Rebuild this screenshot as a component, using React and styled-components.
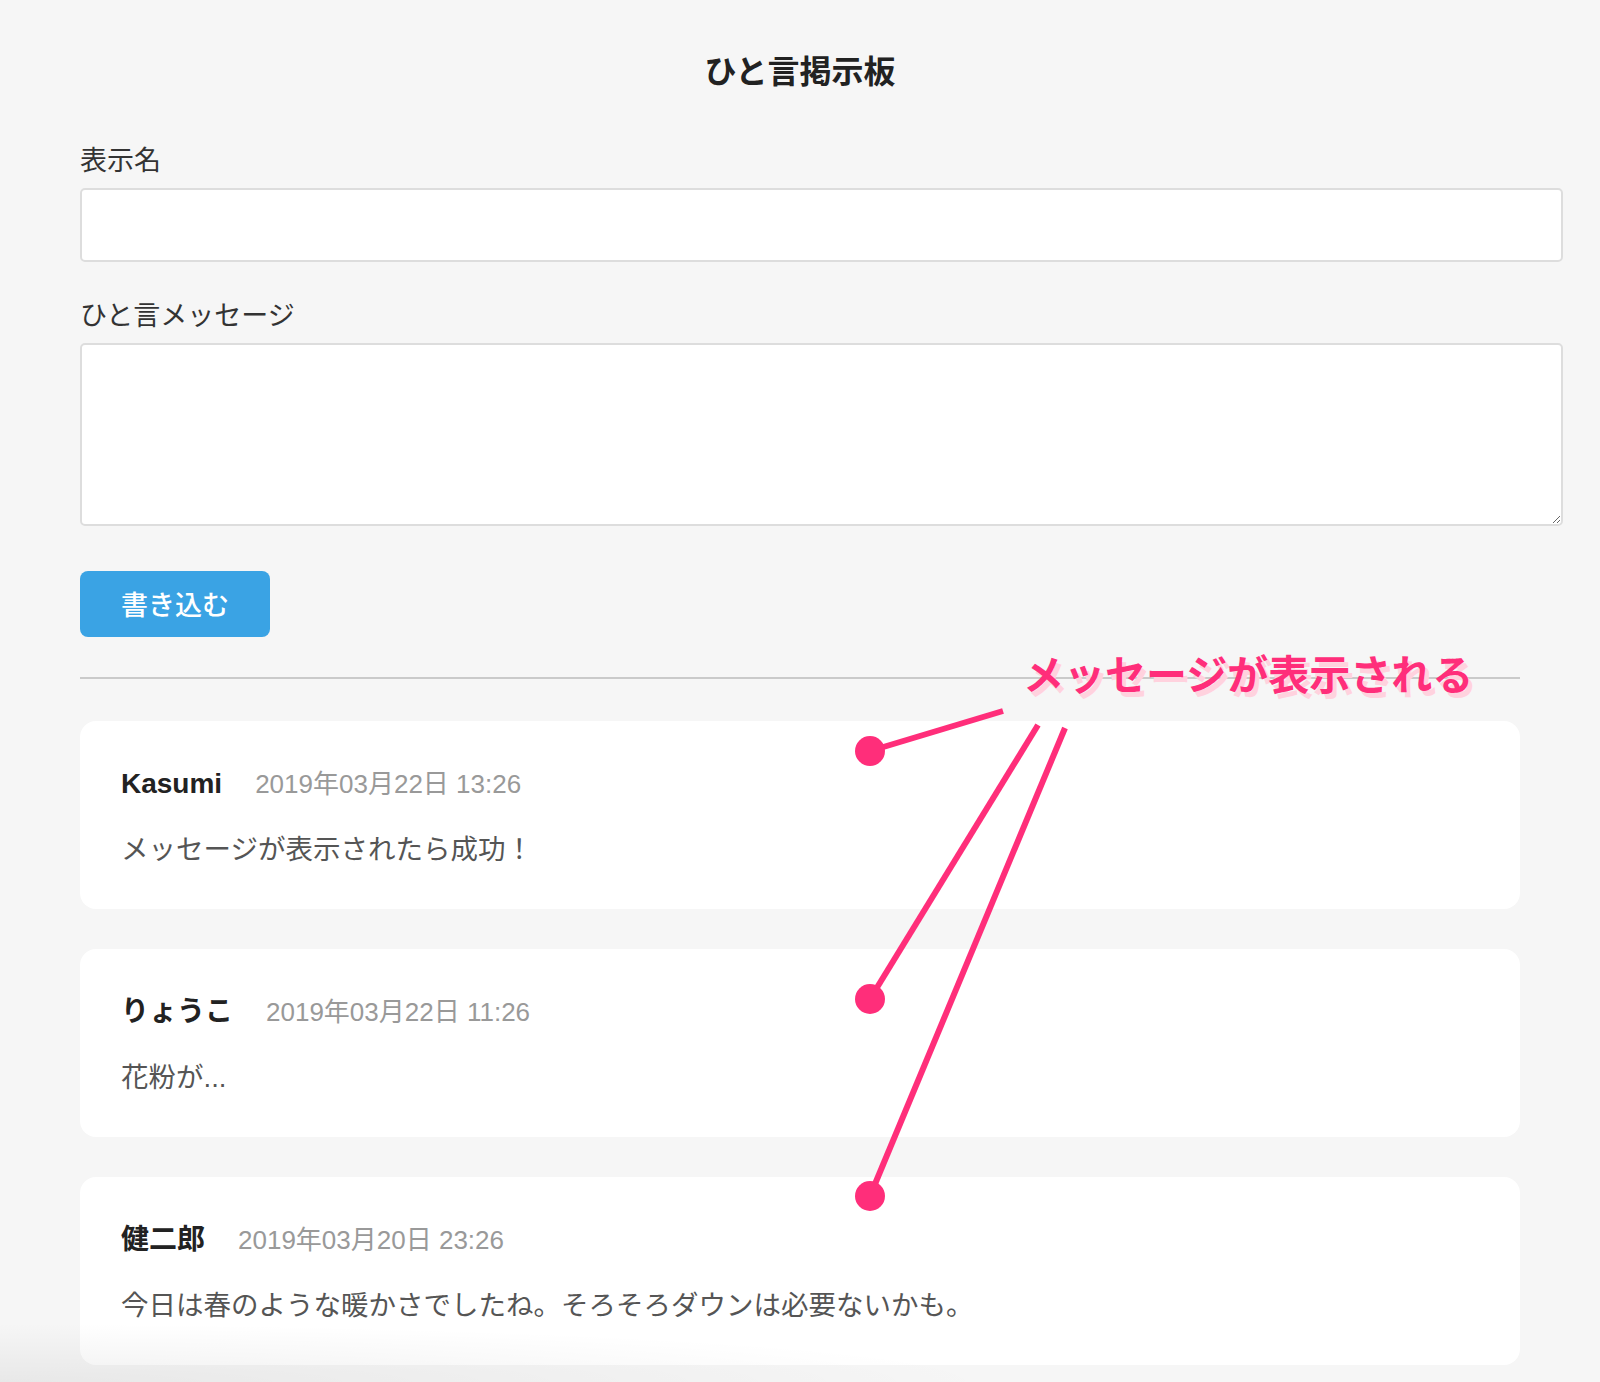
import React from "react";
import styled, { createGlobalStyle } from "styled-components";

const GlobalStyle = createGlobalStyle`
  html, body {
    margin: 0;
    padding: 0;
    background: #f6f6f6;
  }
  body {
    font-family: "Liberation Sans", "Noto Sans CJK JP", sans-serif;
    color: #333;
  }
  * { box-sizing: border-box; }
`;

const PINK = "#ff2e7a";

const Page = styled.div`
  position: relative;
  width: 1600px;
  min-height: 1382px;
  padding: 45px 80px 18px 80px;
  overflow: hidden;
`;

const Title = styled.h1`
  margin: 0;
  font-size: 32px;
  line-height: 48px;
  font-weight: 700;
  text-align: center;
  color: #222;
  font-family: "Noto Sans CJK JP", sans-serif;
`;

const Form = styled.form`
  display: flex;
  flex-direction: column;
  margin-top: 46px;
`;

const Field = styled.div`
  display: flex;
  flex-direction: column;
  gap: 10px;
  margin-top: ${(p) => p.$gap || 0}px;
`;

const Label = styled.label`
  font-size: 27px;
  line-height: 39px;
  color: #333;
  font-family: "Noto Sans CJK JP", sans-serif;
`;

const TextInput = styled.input`
  width: calc(100% + 43px);
  height: 74px;
  background: #fff;
  border: 2px solid #dddddd;
  border-radius: 5px;
  outline: none;
  padding: 0 20px;
  font-size: 26px;
`;

const TextArea = styled.textarea`
  display: block;
  width: calc(100% + 43px);
  height: 183px;
  background: #fff;
  border: 2px solid #dddddd;
  border-radius: 5px;
  outline: none;
  padding: 16px 20px;
  font-size: 26px;
  font-family: inherit;
`;

const SubmitButton = styled.button`
  margin-top: 45px;
  width: 190px;
  height: 66px;
  border: none;
  border-radius: 8px;
  background: #3aa3e4;
  color: #fff;
  font-size: 27px;
  font-family: "Noto Sans CJK JP", sans-serif;
  font-weight: 500;
  cursor: pointer;
  padding: 0 0 2px 0;
`;

const Divider = styled.hr`
  margin: 40px 0 42px 0;
  border: none;
  border-top: 2px solid #cacaca;
  height: 0;
`;

const PostList = styled.ul`
  list-style: none;
  margin: 0;
  padding: 0;
  display: flex;
  flex-direction: column;
  gap: 40px;
`;

const Card = styled.li`
  background: #fff;
  border-radius: 16px;
  padding: 43px 40px 39px 41px;
  display: flex;
  flex-direction: column;
  gap: 27px;
`;

const Meta = styled.div`
  display: flex;
  align-items: baseline;
  gap: 33px;
  line-height: 39px;
  height: 39px;
`;

const Name = styled.span`
  font-size: 28px;
  font-weight: 700;
  color: #222;
`;

const DateText = styled.span`
  font-size: 26px;
  color: #999;
`;

const Message = styled.p`
  margin: 0;
  font-size: 27.5px;
  line-height: 40px;
  color: #555;
`;

const Callout = styled.div`
  position: absolute;
  left: 1023px;
  top: 652px;
  font-family: "Noto Sans CJK JP", sans-serif;
  font-size: 41px;
  line-height: 41px;
  font-weight: 700;
  color: ${PINK};
  text-shadow: 4px 5px 0 #ffd2de;
  white-space: nowrap;
  pointer-events: none;
`;

const Overlay = styled.svg`
  position: absolute;
  left: 0;
  top: 0;
  pointer-events: none;
`;

const BottomShade = styled.div`
  position: absolute;
  left: 0;
  bottom: 0;
  width: 1100px;
  height: 70px;
  background: radial-gradient(ellipse 1000px 60px at 0 100%, rgba(0,0,0,0.06), rgba(0,0,0,0));
  pointer-events: none;
`;

const posts = [
  { name: "Kasumi", date: "2019年03月22日 13:26", text: "メッセージが表示されたら成功！" },
  { name: "りょうこ", date: "2019年03月22日 11:26", text: "花粉が..." },
  { name: "健二郎", date: "2019年03月20日 23:26", text: "今日は春のような暖かさでしたね。そろそろダウンは必要ないかも。" },
];

const pointers = [
  { x1: 1003, y1: 711, x2: 870, y2: 751 },
  { x1: 1038, y1: 725, x2: 870, y2: 999 },
  { x1: 1065, y1: 728, x2: 870, y2: 1196 },
];

export default function App() {
  return (
    <>
      <GlobalStyle />
      <Page>
        <Title>ひと言掲示板</Title>
        <Form onSubmit={(e) => e.preventDefault()}>
          <Field>
            <Label htmlFor="name">表示名</Label>
            <TextInput id="name" type="text" />
          </Field>
          <Field $gap={32}>
            <Label htmlFor="message">ひと言メッセージ</Label>
            <TextArea id="message" />
          </Field>
          <div>
            <SubmitButton type="submit">書き込む</SubmitButton>
          </div>
        </Form>
        <Divider />
        <PostList>
          {posts.map((p) => (
            <Card key={p.name}>
              <Meta>
                <Name>{p.name}</Name>
                <DateText>{p.date}</DateText>
              </Meta>
              <Message>{p.text}</Message>
            </Card>
          ))}
        </PostList>
        <Callout>メッセージが表示される</Callout>
        <Overlay width="1600" height="1382" viewBox="0 0 1600 1382">
          {pointers.map((l, i) => (
            <g key={i}>
              <line x1={l.x1} y1={l.y1} x2={l.x2} y2={l.y2} stroke={PINK} strokeWidth="6" strokeLinecap="butt" />
              <circle cx={l.x2} cy={l.y2} r="15" fill={PINK} />
            </g>
          ))}
        </Overlay>
        <BottomShade />
      </Page>
    </>
  );
}
